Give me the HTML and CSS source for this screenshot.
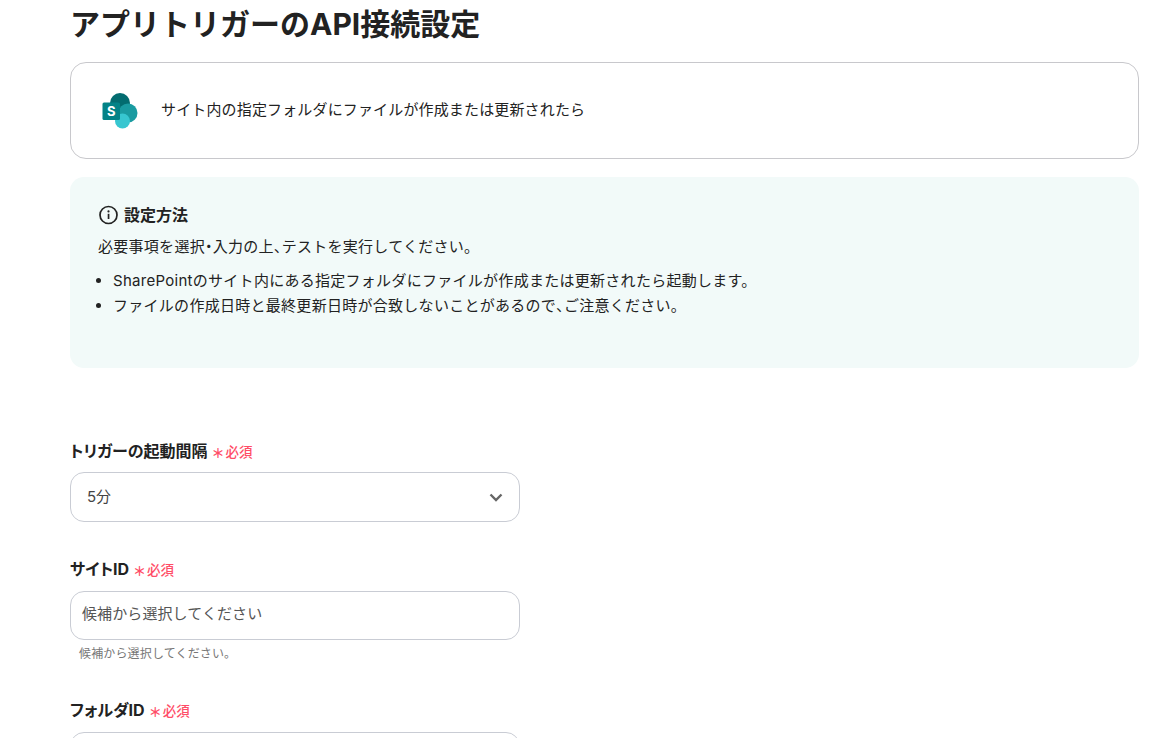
FILE: index.html
```html
<!DOCTYPE html>
<html lang="ja">
<head>
<meta charset="utf-8">
<title>アプリトリガーのAPI接続設定</title>
<link rel="stylesheet" href="styles.css">
</head>
<body>
<main class="page">
  <h1 class="title">アプリトリガーのAPI接続設定</h1>
  <section class="app-card">
    <svg class="logo" viewBox="0 0 36 36" width="36" height="36" aria-hidden="true">
      <circle cx="18" cy="10" r="10" fill="#036c70"/>
      <circle cx="26" cy="20" r="9.5" fill="#1a9ba1"/>
      <circle cx="20.5" cy="28" r="7.5" fill="#37c6d0"/>
      <rect x="0.5" y="9.5" width="17.5" height="17.5" rx="1.5" fill="#038387"/>
      <text x="9.2" y="23.3" class="logo-s">S</text>
    </svg>
    <p class="app-card-text">サイト内の指定フォルダにファイルが作成または更新されたら</p>
  </section>
  <section class="info">
    <div class="info-head">
      <svg viewBox="0 0 20 20" width="20" height="20" aria-hidden="true">
        <circle cx="10.5" cy="10" r="8.5" fill="none" stroke="#222" stroke-width="1.7"/>
        <rect x="9.7" y="8.8" width="1.7" height="5.2" fill="#222"/>
        <circle cx="10.5" cy="6.4" r="1.1" fill="#222"/>
      </svg>
      <h2 class="info-title">設定方法</h2>
    </div>
    <p class="info-lead">必要事項を選択<span class="tight">・</span>入力の上<span class="tight">、</span>テストを実行してください。</p>
    <ul class="info-list">
      <li>SharePointのサイト内にある指定フォルダにファイルが作成または更新されたら起動します。</li>
      <li>ファイルの作成日時と最終更新日時が合致しないことがあるので<span class="tight">、</span>ご注意ください。</li>
    </ul>
  </section>
  <form class="form">
    <div class="field">
      <div class="label-row"><span class="label">トリガーの起動間隔</span><span class="req"><span class="star">＊</span>必須</span></div>
      <div class="control select"><span>5分</span>
        <svg viewBox="0 0 14 9" width="14" height="9" aria-hidden="true"><path d="M1.5 1.5 7 7l5.5-5.5" fill="none" stroke="#666" stroke-width="2.4"/></svg>
      </div>
    </div>
    <div class="field field-site">
      <div class="label-row"><span class="label">サイトID</span><span class="req"><span class="star">＊</span>必須</span></div>
      <div class="control input">候補から選択してください</div>
      <p class="hint">候補から選択してください。</p>
    </div>
    <div class="field field-folder">
      <div class="label-row"><span class="label">フォルダID</span><span class="req"><span class="star">＊</span>必須</span></div>
      <div class="control input"></div>
    </div>
  </form>
</main>
</body>
</html>
```
FILE: styles.css
```css
* { box-sizing: border-box; }
html, body { margin: 0; height: 738px; overflow: hidden; background: #fff; }
body {
  font-family: Inter, "Noto Sans CJK JP", sans-serif;
  color: #222;
}
.tight { font-feature-settings: "palt"; }
.page { width: 1139px; padding: 0 0 0 70px; }
.title { margin: 0; padding-top: 4px; height: 62px; font-size: 30px; line-height: 40px; font-weight: 700; color: #222; }
.app-card {
  height: 97px; border: 1px solid #c8c8cc; border-radius: 16px;
  display: flex; align-items: center; gap: 23px; padding: 0 0 0 31px;
}
.logo { flex: none; }
.logo-s { font: 700 13px Inter, sans-serif; fill: #fff; text-anchor: middle; }
.app-card-text { margin: -2px 0 0; font-size: 15px; line-height: 20px; letter-spacing: 0.15px; }
.info {
  margin-top: 18px; height: 191px; background: #f2faf9; border-radius: 14px;
  padding: 28px 28px 0;
}
.info-head { display: flex; align-items: center; gap: 6px; height: 20px; }
.info-title { margin: 0; font-size: 16px; line-height: 20px; font-weight: 700; font-feature-settings: "palt"; }
.info-lead { margin: 10px 0 0; font-size: 15px; line-height: 24px; letter-spacing: 0.28px; }
.info-list { margin: 10px 0 0; padding: 0 0 0 15px; font-size: 15px; line-height: 24.5px; letter-spacing: 0.28px; }
.form { margin-top: 73px; }
.field { width: 450px; }
.label-row { display: flex; align-items: center; height: 20px; }
.label { font-size: 16px; line-height: 20px; font-weight: 700; font-feature-settings: "palt"; }
.req { display: flex; align-items: center; font-size: 13.5px; font-weight: 500; color: #ff4d67; margin-left: 3px; }
.star { font-size: 13px; font-weight: 700; line-height: 20px; height: 20px; width: 15px; text-align: center; padding-top: 2px; }
.control {
  margin-top: 11px; border: 1px solid #c9ccd4; border-radius: 14px;
  font-size: 15px; color: #444;
}
.select { height: 50px; display: flex; align-items: center; justify-content: space-between; padding: 0 16px 4px; }
.select svg { margin-top: 4px; }
.input { height: 49px; padding: 12px 11px; line-height: 20px; color: #555; letter-spacing: 0.1px; }
.hint { margin: 6px 0 0 9px; font-size: 12px; line-height: 16px; color: #777; letter-spacing: 0.15px; }
.field-site { margin-top: 37px; }
.field-site .control, .field-folder .control { margin-top: 12px; }
.field-folder { margin-top: 38px; }
```
